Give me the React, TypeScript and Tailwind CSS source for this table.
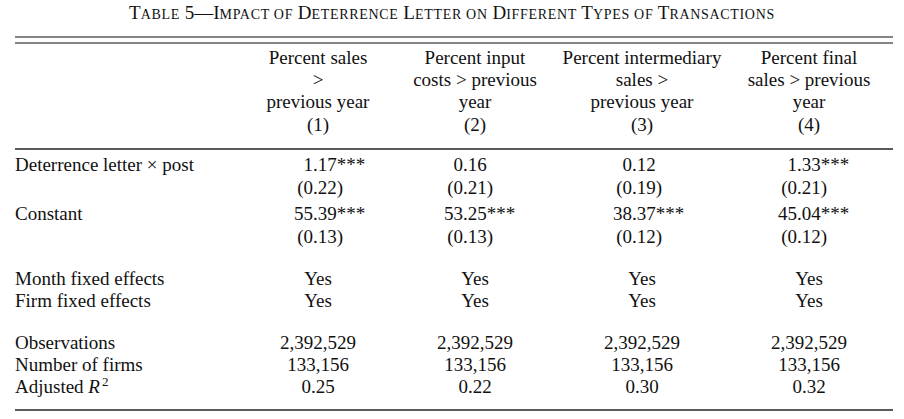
import React from 'react'

const grid = 'grid grid-cols-[225px_156px_158px_176px_158px]'

// where the decimal point sits inside each column
const decimalOffsets = ['w-[73px]', 'w-[67px]', 'w-[78px]', 'w-[67px]']

const headers = [
    ['Percent sales', '>', 'previous year', '(1)'],
    ['Percent input', 'costs > previous', 'year', '(2)'],
    ['Percent intermediary', 'sales >', 'previous year', '(3)'],
    ['Percent final', 'sales > previous', 'year', '(4)'],
]

const coefficientRows = [
    {
        label: 'Deterrence letter \u00d7 post',
        coef: ['1.17***', '0.16', '0.12', '1.33***'],
        se: ['(0.22)', '(0.21)', '(0.19)', '(0.21)'],
    },
    {
        label: 'Constant',
        coef: ['55.39***', '53.25***', '38.37***', '45.04***'],
        se: ['(0.13)', '(0.13)', '(0.12)', '(0.12)'],
    },
]

function Num({ value, col }: { value: string; col: number }) {
    const dot = value.indexOf('.')
    return (
        <div className="flex">
            <span className={`${decimalOffsets[col]} text-right`}>
                {value.slice(0, dot)}
            </span>
            <span>{value.slice(dot)}</span>
        </div>
    )
}

function Rule({ className }: { className: string }) {
    return <div className={`h-[2px] w-full ${className}`} />
}

function CenteredRow({
    label,
    values,
    className = '',
}: {
    label: React.ReactNode
    values: string[]
    className?: string
}) {
    return (
        <div className={`${grid} leading-[22px] ${className}`}>
            <div>{label}</div>
            {values.map((v, i) => (
                <div key={i} className="text-center">
                    {v}
                </div>
            ))}
        </div>
    )
}

function Title() {
    const sm = 'text-[14px] tracking-[0.68px]'
    return (
        <div className="pt-[2px] text-center leading-[22px] text-[19px] whitespace-nowrap">
            T<span className={sm}>ABLE</span> 5—I<span className={sm}>MPACT OF</span> D
            <span className={sm}>ETERRENCE</span> L<span className={sm}>ETTER ON</span> D
            <span className={sm}>IFFERENT</span> T<span className={sm}>YPES OF</span> T
            <span className={sm}>RANSACTIONS</span>
        </div>
    )
}

export default function App() {
    return (
        <div className="w-[904px] h-[419px] bg-white text-[#111] text-[19px] font-['Liberation_Serif',serif]">
            <Title />

            <div className="ml-[15px] w-[878px] mt-[10px]">
                <Rule className="bg-[#858585]" />
                <div className="mt-[4px]">
                    <Rule className="bg-[#858585]" />
                </div>

                {/* column heads */}
                <div className={`${grid} pt-[3px] pb-[12px]`}>
                    <div />
                    {headers.map((lines, i) => (
                        <div key={i} className="text-center whitespace-nowrap">
                            {lines.slice(0, 3).map((l) => (
                                <div key={l} className="leading-[22px]">
                                    {l}
                                </div>
                            ))}
                            <div className="leading-[23px]">{lines[3]}</div>
                        </div>
                    ))}
                </div>
                <Rule className="bg-[#5a5a5a]" />

                <div className="pt-[3px]">
                    {coefficientRows.map((row, r) => (
                        <div key={row.label} className={r > 0 ? 'mt-[3px]' : ''}>
                            <div className={`${grid} leading-[23px]`}>
                                <div>{row.label}</div>
                                {row.coef.map((v, i) => (
                                    <Num key={i} value={v} col={i} />
                                ))}
                            </div>
                            <div className={`${grid} leading-[23px]`}>
                                <div />
                                {row.se.map((v, i) => (
                                    <Num key={i} value={v} col={i} />
                                ))}
                            </div>
                        </div>
                    ))}

                    <CenteredRow
                        className="mt-[20px]"
                        label="Month fixed effects"
                        values={['Yes', 'Yes', 'Yes', 'Yes']}
                    />
                    <CenteredRow
                        label="Firm fixed effects"
                        values={['Yes', 'Yes', 'Yes', 'Yes']}
                    />

                    <CenteredRow
                        className="mt-[20px]"
                        label="Observations"
                        values={['2,392,529', '2,392,529', '2,392,529', '2,392,529']}
                    />
                    <CenteredRow
                        label="Number of firms"
                        values={['133,156', '133,156', '133,156', '133,156']}
                    />
                    <CenteredRow
                        label={
                            <span>
                                Adjusted <i>R</i>
                                <span className="inline-block text-[13px] ml-[2px] relative -top-[7px] leading-[13px]">
                                    2
                                </span>
                            </span>
                        }
                        values={['0.25', '0.22', '0.30', '0.32']}
                    />
                </div>

                <div className="mt-[11px]">
                    <Rule className="bg-[#5a5a5a]" />
                </div>
            </div>
        </div>
    )
}
